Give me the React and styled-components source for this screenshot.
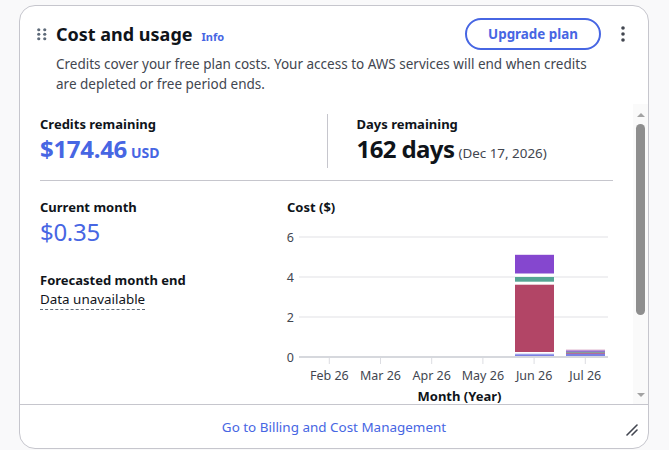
import React from "react";
import styled, { createGlobalStyle } from "styled-components";

const GlobalStyle = createGlobalStyle`
  html, body { margin: 0; padding: 0; }
  body {
    background: #f9f9fa;
    font-family: "Noto Sans", "Open Sans", Arial, sans-serif;
    color: #0f141a;
    -webkit-font-smoothing: antialiased;
  }
  * { box-sizing: border-box; }
`;

const Page = styled.div`
  padding: 5px 20px 0 19px;
  width: 669px;
  height: 450px;
`;

const Card = styled.section`
  position: relative;
  height: 444px;
  background: #ffffff;
  border: 1px solid #c6c6cd;
  border-radius: 16px;
  display: flex;
  flex-direction: column;
  overflow: hidden;
`;

const Header = styled.header`
  display: flex;
  align-items: center;
  justify-content: space-between;
  padding: 12px 22px 0 17px;
  height: 44px;
`;

const TitleGroup = styled.div`
  display: flex;
  align-items: center;
  gap: 9px;
`;

const Title = styled.h2`
  margin: 0;
  font-size: 18px;
  line-height: 24px;
  font-weight: 700;
`;

const InfoLink = styled.a`
  font-size: 11px;
  font-weight: 700;
  color: #4766e3;
  margin-top: 4px;
  text-decoration: none;
`;

const Actions = styled.div`
  display: flex;
  align-items: center;
  gap: 19px;
`;

const UpgradeButton = styled.button`
  height: 32px;
  width: 136px;
  padding: 0;
  border: 2px solid #4766e3;
  border-radius: 16px;
  background: #fff;
  color: #4766e3;
  font-family: inherit;
  font-size: 13.4px;
  font-weight: 700;
`;

const IconButton = styled.span`
  display: inline-flex;
  width: 6px;
  justify-content: center;
  color: #424650;
`;

const Description = styled.p`
  margin: 4px 50px 10px 36px;
  font-size: 13.5px;
  line-height: 20px;
  color: #424650;
`;

const ScrollArea = styled.div`
  flex: 1;
  min-height: 0;
  display: flex;
`;

const ScrollContent = styled.div`
  flex: 1;
  min-width: 0;
  overflow: hidden;
  padding: 10px 20px 0 20px;
`;

const Scrollbar = styled.div`
  width: 15px;
  flex-shrink: 0;
  background: #fafafa;
  display: flex;
  flex-direction: column;
  align-items: center;
`;

const Arrow = styled.span`
  width: 0;
  height: 0;
  border-left: 4.5px solid transparent;
  border-right: 4.5px solid transparent;
  ${(p) =>
    p.$down
      ? "border-top: 4.5px solid #a3a3a3; margin-top: auto; margin-bottom: 7.5px;"
      : "border-bottom: 4.5px solid #a3a3a3; margin-top: 9px;"}
`;

const Thumb = styled.span`
  width: 9px;
  height: 191px;
  margin-top: 6.5px;
  border-radius: 5px;
  background: #8e8e8e;
`;

const StatsRow = styled.div`
  display: grid;
  grid-template-columns: 1fr 1fr;
`;

const Stat = styled.div`
  padding-left: ${(p) => (p.$divided ? "29px" : "0")};
  border-left: ${(p) => (p.$divided ? "1px solid #c6c6cd" : "none")};
`;

const Label = styled.div`
  font-size: 13px;
  line-height: 20px;
  font-weight: 700;
  color: #0f141a;
`;

const BigValue = styled.div`
  font-size: 24px;
  line-height: 29px;
  font-weight: ${(p) => (p.$light ? 400 : 700)};
  color: ${(p) => (p.$blue ? "#4766e3" : "#0f141a")};
  letter-spacing: ${(p) => (p.$tight ? "-0.6px" : "-0.3px")};
`;

const Unit = styled.span`
  font-size: ${(p) => (p.$bold ? "14px" : "13.4px")};
  font-weight: ${(p) => (p.$bold ? 700 : 400)};
  color: ${(p) => (p.$muted ? "#424650" : "inherit")};
  letter-spacing: 0;
  margin-left: 4px;
`;

const Divider = styled.hr`
  margin: 12px 0 16px;
  border: 0;
  border-top: 1px solid #c6c6cd;
`;

const MonthRow = styled.div`
  display: grid;
  grid-template-columns: 247px 1fr;
`;

const LeftStack = styled.div`
  display: flex;
  flex-direction: column;
`;

const Spacer = styled.div`
  height: ${(p) => p.$h}px;
`;

const Dashed = styled.span`
  align-self: flex-start;
  font-size: 13.4px;
  line-height: 19px;
  color: #0f141a;
  border-bottom: 1px dashed #5f6b7a;
`;

const ChartBox = styled.div`
  display: flex;
  flex-direction: column;
`;

const ChartSvg = styled.svg`
  display: block;
  margin-top: 8px;
  overflow: visible;
`;

const Footer = styled.footer`
  height: 44px;
  border-top: 1px solid #c6c6cd;
  display: flex;
  align-items: center;
  justify-content: center;
  flex-shrink: 0;
`;

const FooterLink = styled.a`
  font-size: 13.45px;
  color: #4766e3;
  text-decoration: none;
`;

const ResizeHandle = styled.svg`
  position: absolute;
  right: 10px;
  bottom: 12px;
`;

const DragHandle = () => (
  <svg width="10" height="13" viewBox="0 0 10 13">
    {[0, 1].map((c) =>
      [0, 1, 2].map((r) => (
        <circle key={`${c}-${r}`} cx={1.75 + c * 6} cy={1.75 + r * 4.5} r="1.6" fill="#5f6b7a" />
      ))
    )}
  </svg>
);

const Kebab = () => (
  <svg width="6" height="16" viewBox="0 0 6 16">
    {[0, 1, 2].map((r) => (
      <circle key={r} cx="3" cy={2 + r * 6} r="1.8" fill="#424650" />
    ))}
  </svg>
);

const months = ["Feb 26", "Mar 26", "Apr 26", "May 26", "Jun 26", "Jul 26"];
const PURPLE = "#8547cf";
const TEAL = "#55a594";
const RED = "#b24566";
const BLUE = "#7a80e3";

const Chart = () => {
  const yOf = (v) => 132 - 20 * v;
  const tickX = (i) => 42.3 + i * 51.2;
  return (
    <ChartSvg width="326" height="182" viewBox="0 0 326 182">
      {[6, 4, 2].map((v) => (
        <line key={v} x1="12" x2="321" y1={yOf(v)} y2={yOf(v)} stroke="#ebebee" strokeWidth="1.5" />
      ))}
      {[6, 4, 2, 0].map((v) => (
        <text key={v} x="7" y={yOf(v) + 4.5} textAnchor="end" fontSize="12.5" fill="#424650" fontFamily="Noto Sans, sans-serif">
          {v}
        </text>
      ))}
      {/* Jun bar */}
      <rect x="228" y="29" width="39" height="1" fill="#e6daf3" />
      <rect x="228" y="30" width="39" height="18.5" fill={PURPLE} />
      <rect x="228" y="52" width="39" height="4.7" fill={TEAL} />
      <rect x="228" y="59.7" width="39" height="67.3" fill={RED} />
      <rect x="228" y="128.5" width="39" height="0.8" fill="#c9cdf4" />
      <rect x="228" y="129.3" width="39" height="2" fill={BLUE} />
      {/* Jul bar */}
      <rect x="279" y="124.6" width="39" height="1" fill="#d7a6c2" />
      <rect x="279" y="125.6" width="39" height="1.2" fill={PURPLE} />
      <rect x="279" y="126.8" width="39" height="1" fill={TEAL} />
      <rect x="279" y="127.8" width="39" height="1" fill={RED} />
      <rect x="279" y="128.8" width="39" height="2.4" fill={BLUE} />
      <line x1="12" x2="321" y1="132" y2="132" stroke="#d6d8dd" strokeWidth="2" />
      {months.map((m, i) => (
        <g key={m}>
          <line x1={tickX(i)} x2={tickX(i)} y1="133" y2="139" stroke="#dcdde2" strokeWidth="1" />
          <text x={tickX(i)} y="154.5" textAnchor="middle" fontSize="12.5" fill="#424650" fontFamily="Noto Sans, sans-serif">
            {m}
          </text>
        </g>
      ))}
      <text x="172.5" y="175.5" textAnchor="middle" fontSize="13" fontWeight="700" fill="#0f141a" fontFamily="Noto Sans, sans-serif">
        Month (Year)
      </text>
    </ChartSvg>
  );
};

export default function App() {
  return (
    <>
      <GlobalStyle />
      <Page>
        <Card>
          <Header>
            <TitleGroup>
              <DragHandle />
              <Title>Cost and usage</Title>
              <InfoLink href="#">Info</InfoLink>
            </TitleGroup>
            <Actions>
              <UpgradeButton>Upgrade plan</UpgradeButton>
              <IconButton>
                <Kebab />
              </IconButton>
            </Actions>
          </Header>
          <Description>
            Credits cover your free plan costs. Your access to AWS services will end when credits are depleted or free
            period ends.
          </Description>
          <ScrollArea>
            <ScrollContent>
              <StatsRow>
                <Stat>
                  <Label>Credits remaining</Label>
                  <BigValue $blue>
                    $174.46<Unit $bold>USD</Unit>
                  </BigValue>
                </Stat>
                <Stat $divided>
                  <Label>Days remaining</Label>
                  <BigValue $tight>
                    162 days<Unit $muted>(Dec 17, 2026)</Unit>
                  </BigValue>
                </Stat>
              </StatsRow>
              <Divider />
              <MonthRow>
                <LeftStack>
                  <Label>Current month</Label>
                  <BigValue $blue $light>
                    $0.35
                  </BigValue>
                  <Spacer $h={24} />
                  <Label>Forecasted month end</Label>
                  <Dashed>Data unavailable</Dashed>
                </LeftStack>
                <ChartBox>
                  <Label>Cost ($)</Label>
                  <Chart />
                </ChartBox>
              </MonthRow>
            </ScrollContent>
            <Scrollbar aria-hidden="true">
              <Arrow />
              <Thumb />
              <Arrow $down />
            </Scrollbar>
          </ScrollArea>
          <Footer>
            <FooterLink href="#">Go to Billing and Cost Management</FooterLink>
          </Footer>
          <ResizeHandle width="12" height="12" viewBox="0 0 12 12">
            <line x1="1" y1="11" x2="11" y2="1" stroke="#424650" strokeWidth="1.6" strokeLinecap="round" />
            <line x1="6" y1="11" x2="11" y2="6" stroke="#424650" strokeWidth="1.6" strokeLinecap="round" />
          </ResizeHandle>
        </Card>
      </Page>
    </>
  );
}
